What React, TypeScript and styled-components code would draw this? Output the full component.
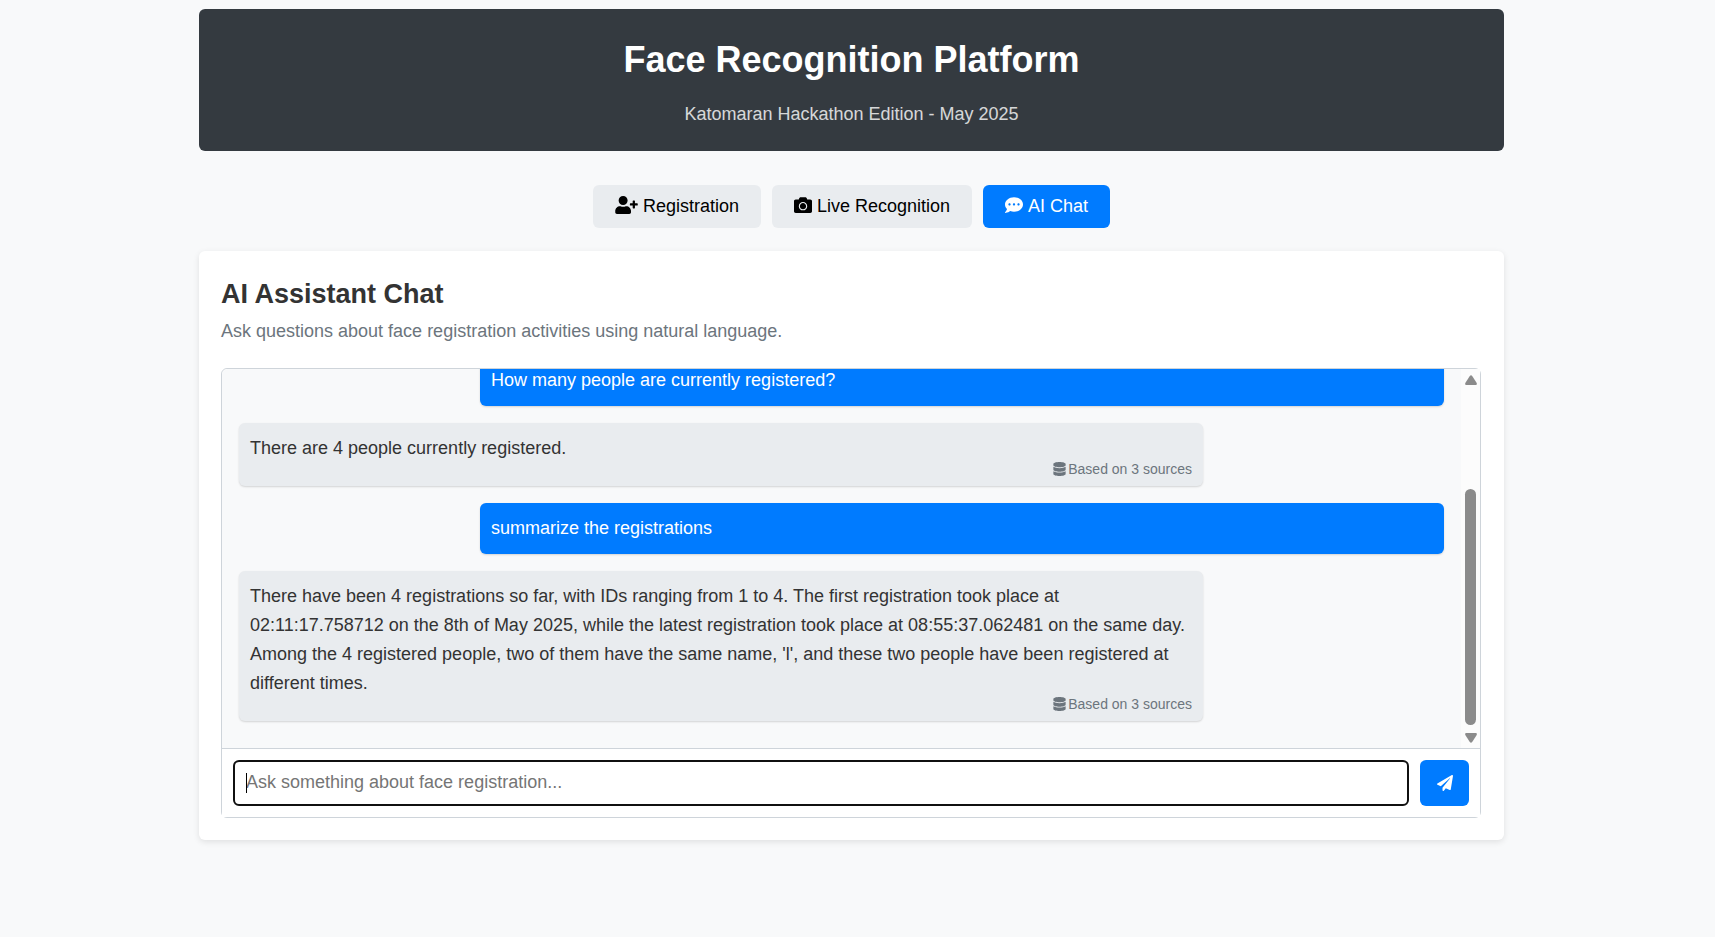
import React from "react";
import styled, { createGlobalStyle } from "styled-components";
import {
  FaCamera,
  FaCommentDots,
  FaDatabase,
  FaPaperPlane,
  FaUserPlus,
} from "react-icons/fa";

const GlobalStyle = createGlobalStyle`
  *, *::before, *::after { box-sizing: border-box; }
  body {
    margin: 0;
    background: #f8f9fa;
    color: #333;
    font-family: "Liberation Sans", Arial, sans-serif;
    font-size: 18px;
    line-height: 29px;
  }
  h1, h2, p { margin: 0; }
  button, input { font: inherit; }
`;

const Page = styled.div`
  padding: 9px 12px 22px 0;
`;

const Container = styled.div`
  max-width: 1305px;
  margin: 0 auto;
`;

const Header = styled.header`
  padding: 22px;
  border-radius: 6px;
  background: #343a40;
  color: #fff;
  text-align: center;
`;

const Title = styled.h1`
  margin-bottom: 11px;
  font-size: 36px;
  line-height: 58px;
`;

const Subtitle = styled.p`
  opacity: 0.8;
`;

const Tabs = styled.nav`
  display: flex;
  justify-content: center;
  gap: 11px;
  margin: 34px 0 23px;
`;

const Tab = styled.button<{ $active?: boolean; $iconWidth?: number }>`
  display: flex;
  align-items: flex-start;
  gap: 5px;
  padding: 11px 22px;
  border: 0;
  border-radius: 6px;
  background: ${(p) => (p.$active ? "#007bff" : "#e9ecef")};
  color: ${(p) => (p.$active ? "#fff" : "#000")};
  line-height: 21px;
  cursor: pointer;

  svg {
    flex: none;
    width: ${(p) => p.$iconWidth ?? 18}px;
    height: 18px;
  }
`;

const Card = styled.main`
  padding: 22px 23px 22px 22px;
  border-radius: 6px;
  background: #fff;
  box-shadow: 0 2px 6px rgba(0, 0, 0, 0.1);
`;

const CardTitle = styled.h2`
  margin-bottom: 2px;
  font-size: 27px;
  line-height: 42px;
`;

const CardText = styled.p`
  margin-bottom: 22px;
  color: #6c757d;
`;

const Chat = styled.section`
  display: flex;
  flex-direction: column;
  height: 450px;
  border: 1px solid #ced4da;
  border-radius: 6px;
`;

const History = styled.div`
  display: flex;
  flex: 1;
  min-height: 0;
  border-radius: 6px 0 0 0;
  background: #f8f9fa;
`;

const Messages = styled.div`
  display: flex;
  flex: 1;
  flex-direction: column;
  justify-content: flex-end;
  gap: 17px;
  padding: 17px 17px 27px;
  overflow: hidden;
`;

const Message = styled.div<{ $user?: boolean }>`
  flex: none;
  align-self: ${(p) => (p.$user ? "flex-end" : "flex-start")};
  width: 80%;
  padding: 11px;
  border-radius: 6px;
  background: ${(p) => (p.$user ? "#007bff" : "#e9ecef")};
  color: ${(p) => (p.$user ? "#fff" : "#333")};
  box-shadow: 0 1px 2px rgba(0, 0, 0, 0.15);
`;

const Sources = styled.div`
  display: flex;
  align-items: center;
  justify-content: flex-end;
  gap: 2px;
  height: 12px;
  color: #6c757d;
  font-size: 14px;

  svg {
    width: 13px;
    height: 14px;
  }
`;

const Scrollbar = styled.div`
  display: flex;
  flex-direction: column;
  align-items: center;
  justify-content: space-between;
  width: 19px;
  padding: 6px 0 5px;
  background: #fcfcfc;
`;

const Track = styled.div`
  display: flex;
  flex: 1;
  flex-direction: column;
  justify-content: flex-end;
  padding: 7px 0 8px;
`;

const Thumb = styled.div`
  width: 11px;
  height: 71%;
  border-radius: 6px;
  background: #8b8b8b;
`;

const Arrow = styled.svg<{ $down?: boolean }>`
  display: block;
  width: 12px;
  height: 10px;
  fill: #8b8b8b;
  transform: ${(p) => (p.$down ? "rotate(180deg)" : "none")};
`;

const Composer = styled.form`
  display: flex;
  gap: 11px;
  padding: 11px;
  border-top: 1px solid #ced4da;
  background: #fff;
`;

const Field = styled.div`
  position: relative;
  display: flex;
  flex: 1;

  /* Text cursor, shown while the box is still empty */
  &:has(input:placeholder-shown)::after {
    content: "";
    position: absolute;
    top: 13px;
    left: 13px;
    width: 1px;
    height: 20px;
    background: #000;
    pointer-events: none;
  }
`;

const Question = styled.input`
  flex: 1;
  min-width: 0;
  height: 46px;
  padding: 0 11px 2px;
  border: 2px solid #101010;
  border-radius: 6px;
  outline: 0;
  background: #fff;
  color: #000;

  &:placeholder-shown {
    caret-color: transparent;
  }

  &::placeholder {
    color: #757575;
  }
`;

const Send = styled.button`
  display: flex;
  align-items: center;
  justify-content: center;
  width: 49px;
  border: 0;
  border-radius: 6px;
  background: #007bff;
  color: #fff;
  cursor: pointer;
`;

const ScrollArrow = ({ down }: { down?: boolean }) => (
  <Arrow $down={down} viewBox="0 0 12 10" aria-hidden="true">
    <path d="M4.8 1Q6-.6 7.2 1L11.7 8Q12.3 9.8 10.8 10H1.2Q-.3 9.8 .3 8Z" />
  </Arrow>
);

type Entry = { text: string; user?: boolean; sources?: number };

const entries: Entry[] = [
  { user: true, text: "How many people are currently registered?" },
  { text: "There are 4 people currently registered.", sources: 3 },
  { user: true, text: "summarize the registrations" },
  {
    text: "There have been 4 registrations so far, with IDs ranging from 1 to 4. The first registration took place at 02:11:17.758712 on the 8th of May 2025, while the latest registration took place at 08:55:37.062481 on the same day. Among the 4 registered people, two of them have the same name, 'l', and these two people have been registered at different times.",
    sources: 3,
  },
];

export default function App() {
  return (
    <Page>
      <GlobalStyle />
      <Container>
        <Header>
          <Title>Face Recognition Platform</Title>
          <Subtitle>Katomaran Hackathon Edition - May 2025</Subtitle>
        </Header>
        <Tabs>
          <Tab type="button" $iconWidth={23}>
            <FaUserPlus />
            Registration
          </Tab>
          <Tab type="button">
            <FaCamera />
            Live Recognition
          </Tab>
          <Tab type="button" $active>
            <FaCommentDots />
            AI Chat
          </Tab>
        </Tabs>
        <Card>
          <CardTitle>AI Assistant Chat</CardTitle>
          <CardText>
            Ask questions about face registration activities using natural
            language.
          </CardText>
          <Chat>
            <History>
              <Messages>
                {entries.map((entry) => (
                  <Message key={entry.text} $user={entry.user}>
                    <p>{entry.text}</p>
                    {entry.sources && (
                      <Sources>
                        <FaDatabase />
                        <span>Based on {entry.sources} sources</span>
                      </Sources>
                    )}
                  </Message>
                ))}
              </Messages>
              <Scrollbar aria-hidden="true">
                <ScrollArrow />
                <Track>
                  <Thumb />
                </Track>
                <ScrollArrow down />
              </Scrollbar>
            </History>
            <Composer onSubmit={(e) => e.preventDefault()}>
              <Field>
                <Question
                  type="text"
                  autoFocus
                  aria-label="Your question"
                  placeholder="Ask something about face registration..."
                />
              </Field>
              <Send type="submit" aria-label="Send">
                <FaPaperPlane size={16} />
              </Send>
            </Composer>
          </Chat>
        </Card>
      </Container>
    </Page>
  );
}
